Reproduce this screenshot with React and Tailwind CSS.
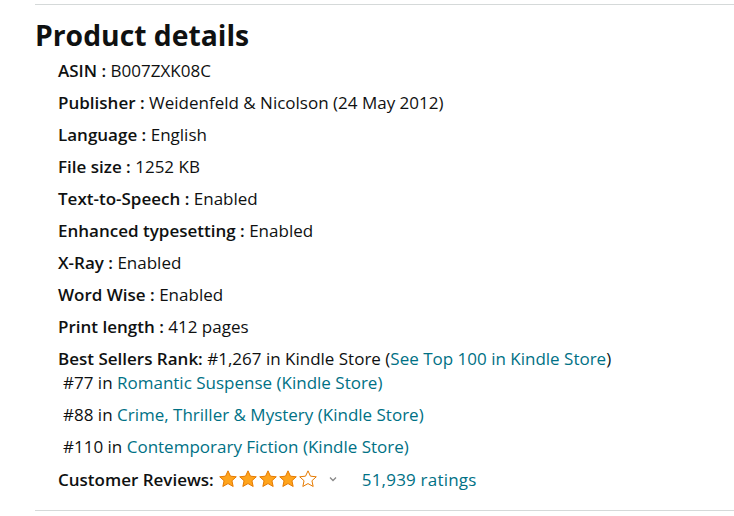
const Star = ({ fill }) => (
  <svg width="20" height="20" viewBox="0 0 24 24" className="shrink-0">
    <path
      d="M12 2.2l2.95 6.4 7 .75-5.22 4.73 1.46 6.9L12 17.5l-6.19 3.48 1.46-6.9L2.05 9.35l7-.75z"
      fill={fill ? '#FFA41C' : '#fff'}
      stroke="#E67A00"
      strokeWidth="1.2"
      strokeLinejoin="round"
    />
  </svg>
)

const Row = ({ label, value }) => (
  <li className="h-8 flex items-center">
    <span className="font-semibold">{label} : </span>
    <span>&nbsp;{value}</span>
  </li>
)

export default function App() {
  const rows = [
    ['ASIN', 'B007ZXK08C'],
    ['Publisher', 'Weidenfeld & Nicolson (24 May 2012)'],
    ['Language', 'English'],
    ['File size', '1252 KB'],
    ['Text-to-Speech', 'Enabled'],
    ['Enhanced typesetting', 'Enabled'],
    ['X-Ray', 'Enabled'],
    ['Word Wise', 'Enabled'],
    ['Print length', '412 pages'],
  ]
  return (
    <div className="w-[734px] h-[516px] bg-white text-[#0F1111] pl-[35px] pt-1 overflow-hidden" style={{ fontFamily: '"Open Sans", Arial, sans-serif' }}>
      <div className="border-t border-[#d5d9d9]" />
      <h1 className="text-[28.3px] font-bold leading-none mt-[16px] mb-[5px]">Product details</h1>
      <ul className="pl-[23px] text-[17px]">
        {rows.map(([l, v]) => <Row key={l} label={l} value={v} />)}
        <li className="h-8 flex items-center">
          <span className="font-semibold">Best Sellers Rank:</span>
          <span>&nbsp;#1,267 in Kindle Store (<span className="text-[#007185]">See Top 100 in Kindle Store</span>)</span>
        </li>
        <li className="pl-[5px] h-[19px] flex items-center -mt-[1px]">#77 in&nbsp;<span className="text-[#007185]">Romantic Suspense (Kindle Store)</span></li>
        <li className="pl-[5px] h-8 flex items-center mt-[6px]">#88 in&nbsp;<span className="text-[#007185]">Crime, Thriller &amp; Mystery (Kindle Store)</span></li>
        <li className="pl-[5px] h-8 flex items-center">#110 in&nbsp;<span className="text-[#007185]">Contemporary Fiction (Kindle Store)</span></li>
        <li className="h-8 flex items-center mt-[1px]">
          <span className="font-semibold">Customer Reviews:</span>
          <span className="flex items-center ml-[4px] gap-0">
            <Star fill /><Star fill /><Star fill /><Star fill /><Star />
          </span>
          <svg width="10" height="10" viewBox="0 0 10 10" className="ml-[10px]">
            <path d="M2 3.5l3 3 3-3" fill="none" stroke="#888" strokeWidth="1.3" />
          </svg>
          <span className="ml-[24px] text-[#007185] tracking-[0.2px]">51,939 ratings</span>
        </li>
      </ul>
      <div className="border-t border-[#d5d9d9] mt-[15px]" />
    </div>
  )
}
